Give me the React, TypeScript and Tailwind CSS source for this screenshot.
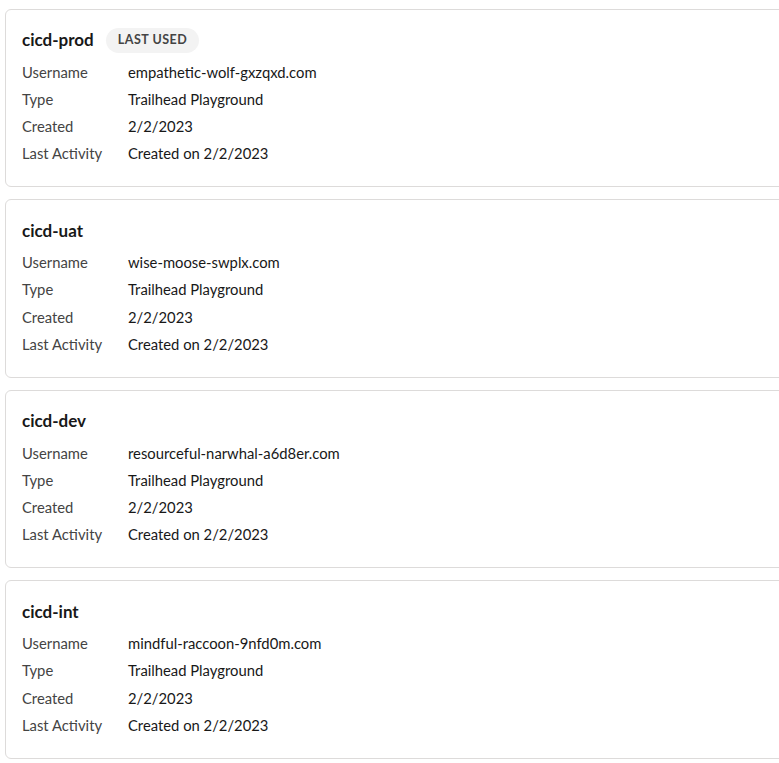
const orgs = [
  { alias: "cicd-prod", username: "empathetic-wolf-gxzqxd.com", lastUsed: true },
  { alias: "cicd-uat", username: "wise-moose-swplx.com" },
  { alias: "cicd-dev", username: "resourceful-narwhal-a6d8er.com" },
  { alias: "cicd-int", username: "mindful-raccoon-9nfd0m.com" },
];

function Row({ label, value }: { label: string; value: string }) {
  return (
    <div className="flex h-[27.3px] items-center">
      <div className="w-[106px] shrink-0 text-[#444444]">{label}</div>
      <div className="text-[#181818]">{value}</div>
    </div>
  );
}

function OrgCard({ alias, username, lastUsed }: { alias: string; username: string; lastUsed?: boolean }) {
  return (
    <div className="rounded-[6px] border border-[#dddbda] bg-white pl-4 pt-[18px] pb-[19px]">
      <div className="flex h-6 items-center gap-3">
        <h2 className="text-[17px] font-bold text-[#181818]">{alias}</h2>
        {lastUsed && (
          <span className="flex h-[25px] items-center rounded-full bg-[#f3f3f3] px-3 text-[12.5px] font-bold uppercase tracking-[0.04em] text-[#444444]">
            Last used
          </span>
        )}
      </div>
      <div className="mt-[6px] text-[14.8px]">
        <Row label="Username" value={username} />
        <Row label="Type" value="Trailhead Playground" />
        <Row label="Created" value="2/2/2023" />
        <Row label="Last Activity" value="Created on 2/2/2023" />
      </div>
    </div>
  );
}

export default function App() {
  return (
    <div className="min-h-screen overflow-hidden bg-white font-['Lato',sans-serif]">
      <div className="-mr-3 flex flex-col gap-[12.3px] pl-[5px] pt-[9px]">
        {orgs.map((o) => (
          <OrgCard key={o.alias} {...o} />
        ))}
      </div>
    </div>
  );
}
